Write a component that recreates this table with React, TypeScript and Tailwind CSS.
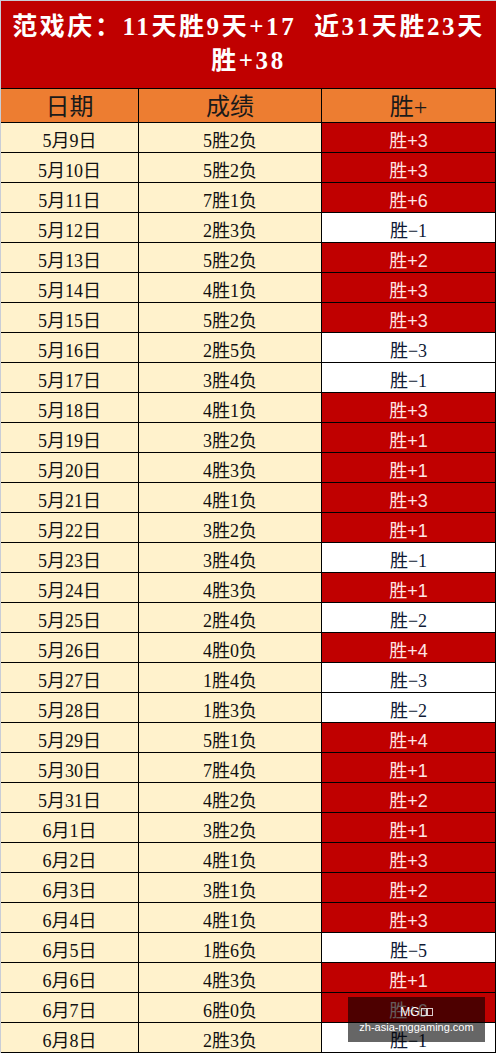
import React from 'react';

interface DayRow {
  date: string;
  record: string;
  net: string;
}

const rows: DayRow[] = [
  { date: '5月9日', record: '5胜2负', net: '+3' },
  { date: '5月10日', record: '5胜2负', net: '+3' },
  { date: '5月11日', record: '7胜1负', net: '+6' },
  { date: '5月12日', record: '2胜3负', net: '-1' },
  { date: '5月13日', record: '5胜2负', net: '+2' },
  { date: '5月14日', record: '4胜1负', net: '+3' },
  { date: '5月15日', record: '5胜2负', net: '+3' },
  { date: '5月16日', record: '2胜5负', net: '-3' },
  { date: '5月17日', record: '3胜4负', net: '-1' },
  { date: '5月18日', record: '4胜1负', net: '+3' },
  { date: '5月19日', record: '3胜2负', net: '+1' },
  { date: '5月20日', record: '4胜3负', net: '+1' },
  { date: '5月21日', record: '4胜1负', net: '+3' },
  { date: '5月22日', record: '3胜2负', net: '+1' },
  { date: '5月23日', record: '3胜4负', net: '-1' },
  { date: '5月24日', record: '4胜3负', net: '+1' },
  { date: '5月25日', record: '2胜4负', net: '-2' },
  { date: '5月26日', record: '4胜0负', net: '+4' },
  { date: '5月27日', record: '1胜4负', net: '-3' },
  { date: '5月28日', record: '1胜3负', net: '-2' },
  { date: '5月29日', record: '5胜1负', net: '+4' },
  { date: '5月30日', record: '7胜4负', net: '+1' },
  { date: '5月31日', record: '4胜2负', net: '+2' },
  { date: '6月1日', record: '3胜2负', net: '+1' },
  { date: '6月2日', record: '4胜1负', net: '+3' },
  { date: '6月3日', record: '3胜1负', net: '+2' },
  { date: '6月4日', record: '4胜1负', net: '+3' },
  { date: '6月5日', record: '1胜6负', net: '-5' },
  { date: '6月6日', record: '4胜3负', net: '+1' },
  { date: '6月7日', record: '6胜0负', net: '+6' },
  { date: '6月8日', record: '2胜3负', net: '-1' },
];

const serif = "font-['Liberation_Serif','Noto_Sans_CJK_SC',serif]";

export default function App() {
  return (
    <div className="relative w-[496px] h-[1053px] overflow-hidden bg-white border-t border-l border-[#c9cdd6]">
      {/* title */}
      <div
        className={`h-[88px] bg-[#c00000] border-b border-black flex flex-col items-center pt-[9px] text-white font-bold text-[25px] leading-[34px] tracking-[2.6px] ${serif}`}
      >
        <div className="whitespace-nowrap">范戏庆：11天胜9天+17&nbsp;&nbsp;近31天胜23天</div>
        <div>胜+38</div>
      </div>

      {/* header */}
      <div className={`flex h-[34px] bg-[#ed7d31] border-b border-black text-[24px] text-[#1a1a1a] ${serif}`}>
        <div className="w-[138px] border-r border-black flex items-center justify-center pt-[2px]">日期</div>
        <div className="w-[183px] border-r border-black flex items-center justify-center pt-[2px]">成绩</div>
        <div className="w-[174px] border-r border-black flex items-center justify-center pt-[2px]">胜+</div>
      </div>

      {rows.map((r) => {
        const win = r.net.startsWith('+');
        return (
          <div key={r.date} className={`flex h-[30px] border-b border-black text-[18px] ${serif}`}>
            <div className="w-[138px] bg-[#fff2cc] border-r border-black flex items-center justify-center pt-[7px] text-[#111]">
              {r.date}
            </div>
            <div className="w-[183px] bg-[#fff2cc] border-r border-black flex items-center justify-center pt-[7px] text-[#111]">
              {r.record}
            </div>
            {win ? (
              <div className="w-[174px] bg-[#c00000] border-r border-black flex items-center justify-center pt-[7px] text-[#ffe4e4] font-['Liberation_Sans','Noto_Sans_CJK_SC',sans-serif]">
                胜{r.net}
              </div>
            ) : (
              <div className="w-[174px] bg-white border-r border-black flex items-center justify-center pt-[7px] text-[#0f1a36]">
                胜{r.net.replace('-', '−')}
              </div>
            )}
          </div>
        );
      })}

      {/* watermark */}
      <div className="absolute left-[347px] top-[996px] w-[137px] h-[45px] bg-black/60 flex flex-col items-center justify-center text-white text-[11px] leading-[15px] font-['Liberation_Sans',Arial,sans-serif]">
        <div className="flex items-center text-[12px]">
          MG
          <span className="inline-block w-[6px] h-[8px] border border-white/80 ml-[1px]"></span>
          <span className="inline-block w-[6px] h-[8px] border border-white/80"></span>
        </div>
        <div>zh-asia-mggaming.com</div>
      </div>
    </div>
  );
}
